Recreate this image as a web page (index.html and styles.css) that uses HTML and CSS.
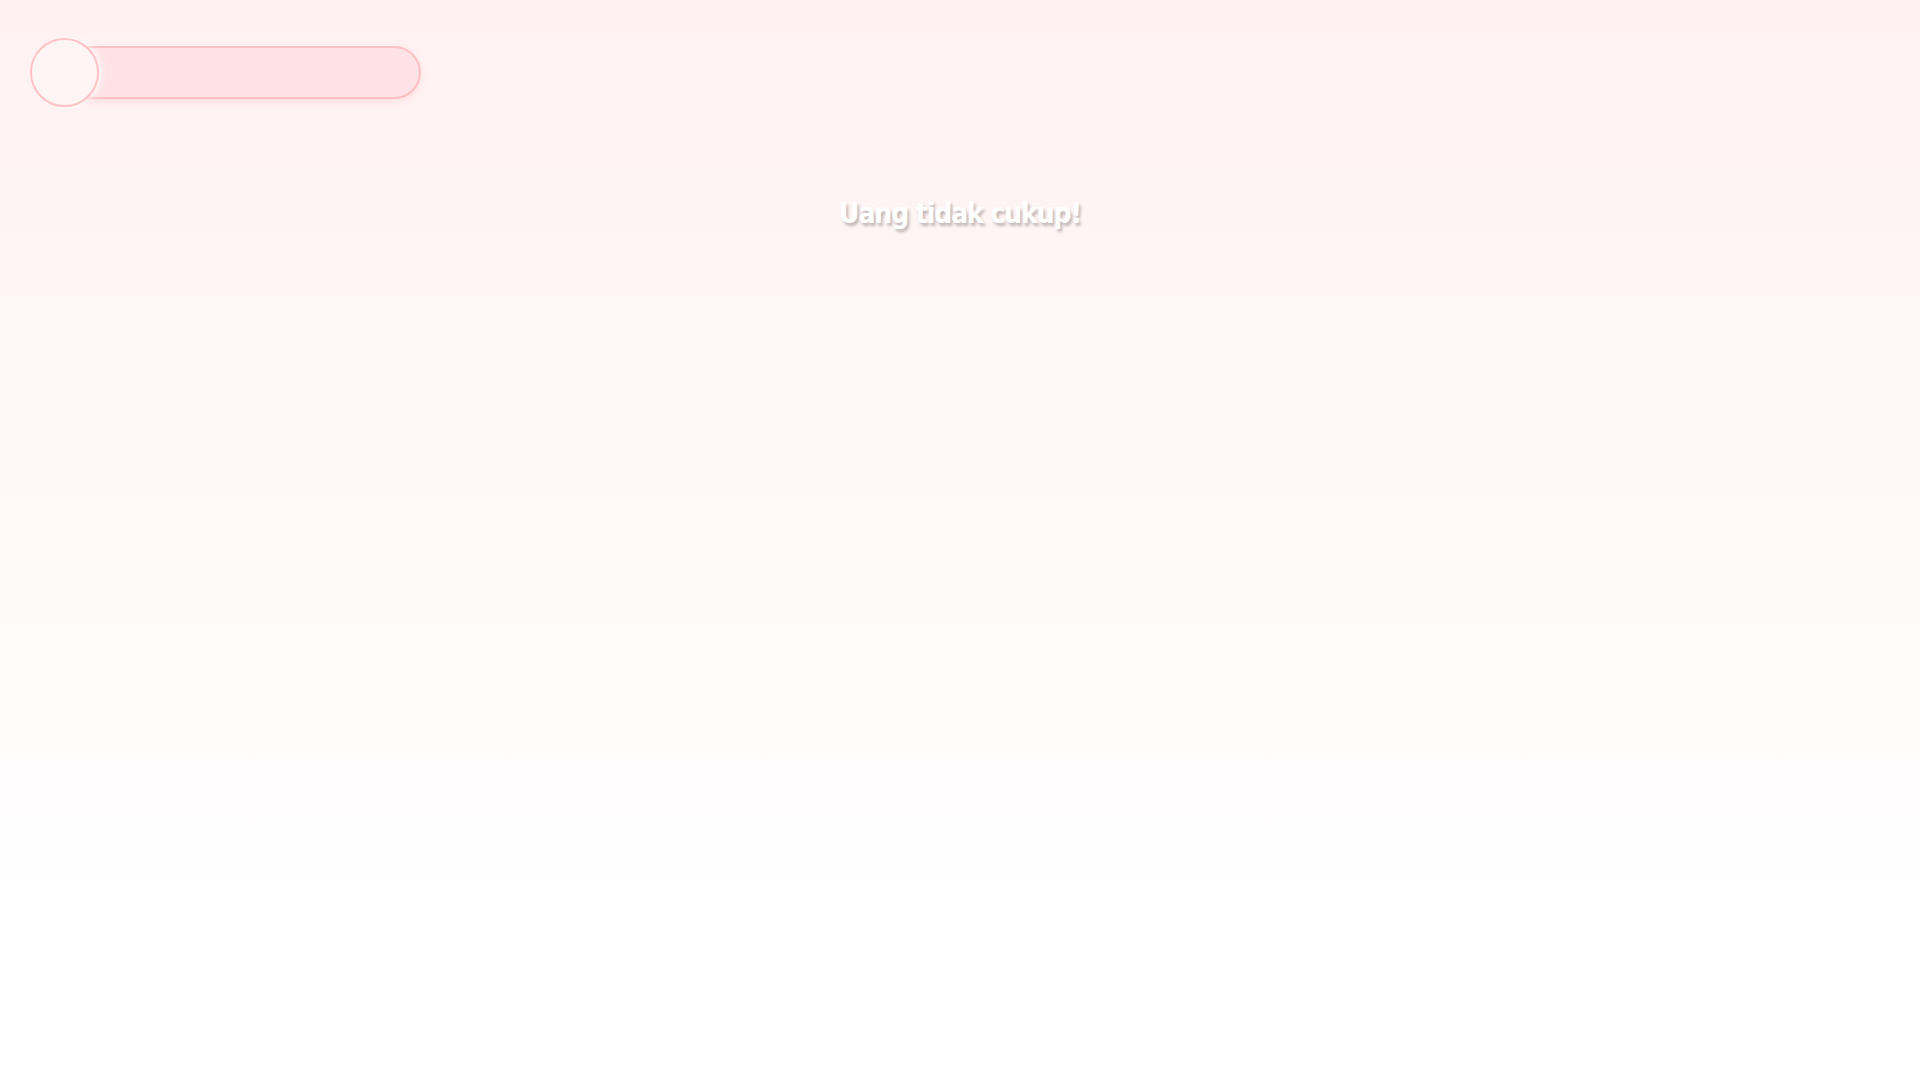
FILE: index.html
```html
<!DOCTYPE html>
<html lang="id">
<head>
  <meta charset="UTF-8">
  <title>Toko</title>
  <link rel="stylesheet" href="styles.css">
</head>
<body>
  <div class="top-bar">
    <div class="coin"></div>
    <div class="money-bar"></div>
  </div>

  <p class="notice">Uang tidak cukup!</p>
</body>
</html>
```

FILE: styles.css
```css
html {
  height: 100%;
}

body {
  margin: 0;
  min-height: 100vh;
  padding: 38px 30px 0;
  box-sizing: border-box;
  font-family: "DejaVu Sans Condensed", "DejaVu Sans", sans-serif;
  background: linear-gradient(180deg, #fff1f1 0%, #fffafa 55%, #ffffff 85%);
}

.top-bar {
  display: flex;
  align-items: center;
}

.coin {
  position: relative;
  z-index: 2;
  width: 69px;
  height: 69px;
  box-sizing: border-box;
  border-radius: 50%;
  border: 2px solid #ffc2c6;
  background: #fff5f5;
  box-shadow: 4px 0 6px rgba(255, 255, 255, 0.6);
}

.money-bar {
  width: 357px;
  height: 53px;
  margin-left: -35px;
  box-sizing: border-box;
  border-radius: 27px;
  border: 2px solid #ffc0c4;
  background: #ffe2e5;
  box-shadow: 0 3px 6px rgba(255, 170, 175, 0.25);
}

.notice {
  margin: 90px 0 0;
  text-align: center;
  color: #ffffff;
  font-size: 28px;
  font-weight: bold;
  letter-spacing: -1.1px;
  text-shadow: 2px 3px 3px rgba(0, 0, 0, 0.25);
}
```
